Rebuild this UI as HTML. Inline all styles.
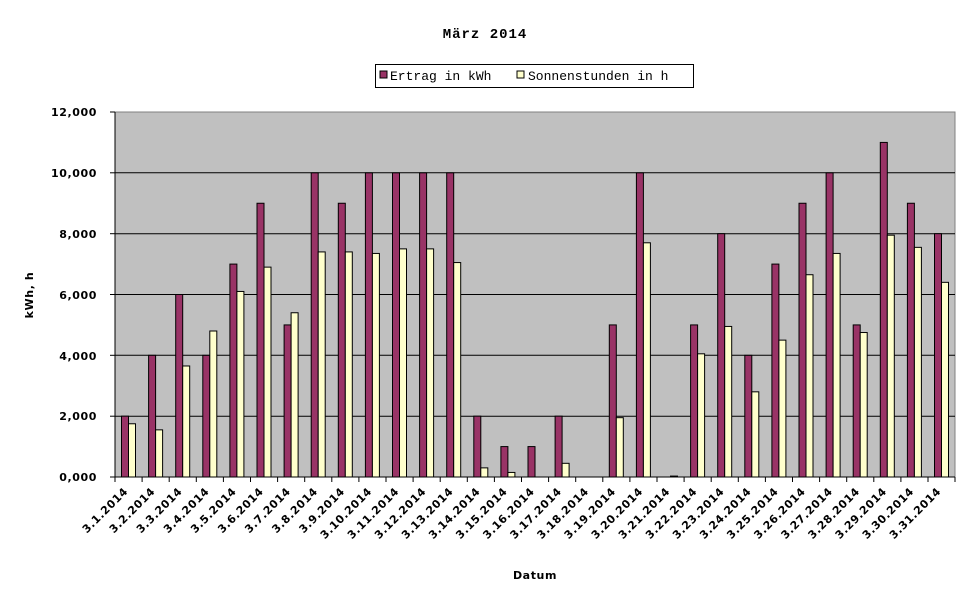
<!DOCTYPE html>
<html><head><meta charset="utf-8"><style>
html,body{margin:0;padding:0;background:#fff;}
svg{display:block;}
text{font-family:"DejaVu Sans","Liberation Sans",sans-serif;font-weight:bold;font-size:11px;fill:#000;letter-spacing:0.6px;}
.lg{font-family:"Liberation Mono",monospace;font-weight:normal;font-size:13px;letter-spacing:0;}
</style></head><body>
<svg id="c" width="970" height="604" xmlns="http://www.w3.org/2000/svg">
<rect x="115" y="112" width="840" height="365" fill="#c0c0c0" stroke="#808080"/>
<g stroke="#000" stroke-width="1">
<line x1="115" y1="172.8" x2="955" y2="172.8"/>
<line x1="115" y1="233.7" x2="955" y2="233.7"/>
<line x1="115" y1="294.5" x2="955" y2="294.5"/>
<line x1="115" y1="355.3" x2="955" y2="355.3"/>
<line x1="115" y1="416.2" x2="955" y2="416.2"/>
<line x1="115" y1="112" x2="115" y2="477"/>
<line x1="110" y1="477" x2="955" y2="477"/>
<line x1="110" y1="112" x2="115" y2="112"/>
<line x1="110" y1="172.8" x2="115" y2="172.8"/>
<line x1="110" y1="233.7" x2="115" y2="233.7"/>
<line x1="110" y1="294.5" x2="115" y2="294.5"/>
<line x1="110" y1="355.3" x2="115" y2="355.3"/>
<line x1="110" y1="416.2" x2="115" y2="416.2"/>
</g>
<g id="bars"></g>
<g text-anchor="end">
<text x="97" y="116">12,000</text>
<text x="97" y="177">10,000</text>
<text x="97" y="238">8,000</text>
<text x="97" y="299">6,000</text>
<text x="97" y="360">4,000</text>
<text x="97" y="420">2,000</text>
<text x="97" y="481">0,000</text>
</g>
<text x="485" y="38" text-anchor="middle" style="font-family:'Liberation Mono',monospace;font-size:14px;letter-spacing:1px">März 2014</text>
<rect x="375.5" y="64.5" width="318" height="23" fill="#fff" stroke="#000"/>
<rect x="380" y="71" width="7" height="7" fill="#993366" stroke="#000"/>
<text class="lg" x="390" y="80">Ertrag in kWh</text>
<rect x="517" y="71" width="7" height="7" fill="#ffffcc" stroke="#000"/>
<text class="lg" x="528" y="80">Sonnenstunden in h</text>
<text x="535" y="579" text-anchor="middle">Datum</text>
<text transform="translate(33,295) rotate(-90)" text-anchor="middle">kWh, h</text>
<g text-anchor="end">
<text transform="translate(128.6,492) rotate(-45)">3.1.2014</text>
<text transform="translate(155.7,492) rotate(-45)">3.2.2014</text>
<text transform="translate(182.8,492) rotate(-45)">3.3.2014</text>
<text transform="translate(209.9,492) rotate(-45)">3.4.2014</text>
<text transform="translate(237,492) rotate(-45)">3.5.2014</text>
<text transform="translate(264.1,492) rotate(-45)">3.6.2014</text>
<text transform="translate(291.2,492) rotate(-45)">3.7.2014</text>
<text transform="translate(318.3,492) rotate(-45)">3.8.2014</text>
<text transform="translate(345.4,492) rotate(-45)">3.9.2014</text>
<text transform="translate(372.5,492) rotate(-45)">3.10.2014</text>
<text transform="translate(399.6,492) rotate(-45)">3.11.2014</text>
<text transform="translate(426.7,492) rotate(-45)">3.12.2014</text>
<text transform="translate(453.8,492) rotate(-45)">3.13.2014</text>
<text transform="translate(480.9,492) rotate(-45)">3.14.2014</text>
<text transform="translate(508,492) rotate(-45)">3.15.2014</text>
<text transform="translate(535.1,492) rotate(-45)">3.16.2014</text>
<text transform="translate(562.2,492) rotate(-45)">3.17.2014</text>
<text transform="translate(589.3,492) rotate(-45)">3.18.2014</text>
<text transform="translate(616.4,492) rotate(-45)">3.19.2014</text>
<text transform="translate(643.5,492) rotate(-45)">3.20.2014</text>
<text transform="translate(670.6,492) rotate(-45)">3.21.2014</text>
<text transform="translate(697.7,492) rotate(-45)">3.22.2014</text>
<text transform="translate(724.8,492) rotate(-45)">3.23.2014</text>
<text transform="translate(751.9,492) rotate(-45)">3.24.2014</text>
<text transform="translate(779,492) rotate(-45)">3.25.2014</text>
<text transform="translate(806.1,492) rotate(-45)">3.26.2014</text>
<text transform="translate(833.2,492) rotate(-45)">3.27.2014</text>
<text transform="translate(860.3,492) rotate(-45)">3.28.2014</text>
<text transform="translate(887.4,492) rotate(-45)">3.29.2014</text>
<text transform="translate(914.5,492) rotate(-45)">3.30.2014</text>
<text transform="translate(941.6,492) rotate(-45)">3.31.2014</text>
</g>
</svg>
<script>
var m=[2,4,6,4,7,9,5,10,9,10,10,10,10,2,1,1,2,0,5,10,0,5,8,4,7,9,10,5,11,9,8];
var y=[1.75,1.55,3.65,4.8,6.1,6.9,5.4,7.4,7.4,7.35,7.5,7.5,7.05,0.3,0.15,0,0.45,0,1.95,7.7,0.03,4.05,4.95,2.8,4.5,6.65,7.35,4.75,7.95,7.55,6.4];
var g=document.getElementById('bars'),s='',k=365/12;
for(var i=0;i<31;i++){var x=115+27.1*i;
s+='<line x1="'+(x)+'" y1="477" x2="'+x+'" y2="482" stroke="#000"/>';
if(m[i]>0){var h=m[i]*k;s+='<rect x="'+(x+6.5)+'" y="'+(477-h)+'" width="7" height="'+h+'" fill="#993366" stroke="#000"/>';}
if(y[i]>0){var h2=y[i]*k;s+='<rect x="'+(x+13.5)+'" y="'+(477-h2)+'" width="7" height="'+h2+'" fill="#ffffcc" stroke="#000"/>';}}
s+='<line x1="955" y1="477" x2="955" y2="482" stroke="#000"/>';
g.innerHTML=s;
</script>
</body></html>
